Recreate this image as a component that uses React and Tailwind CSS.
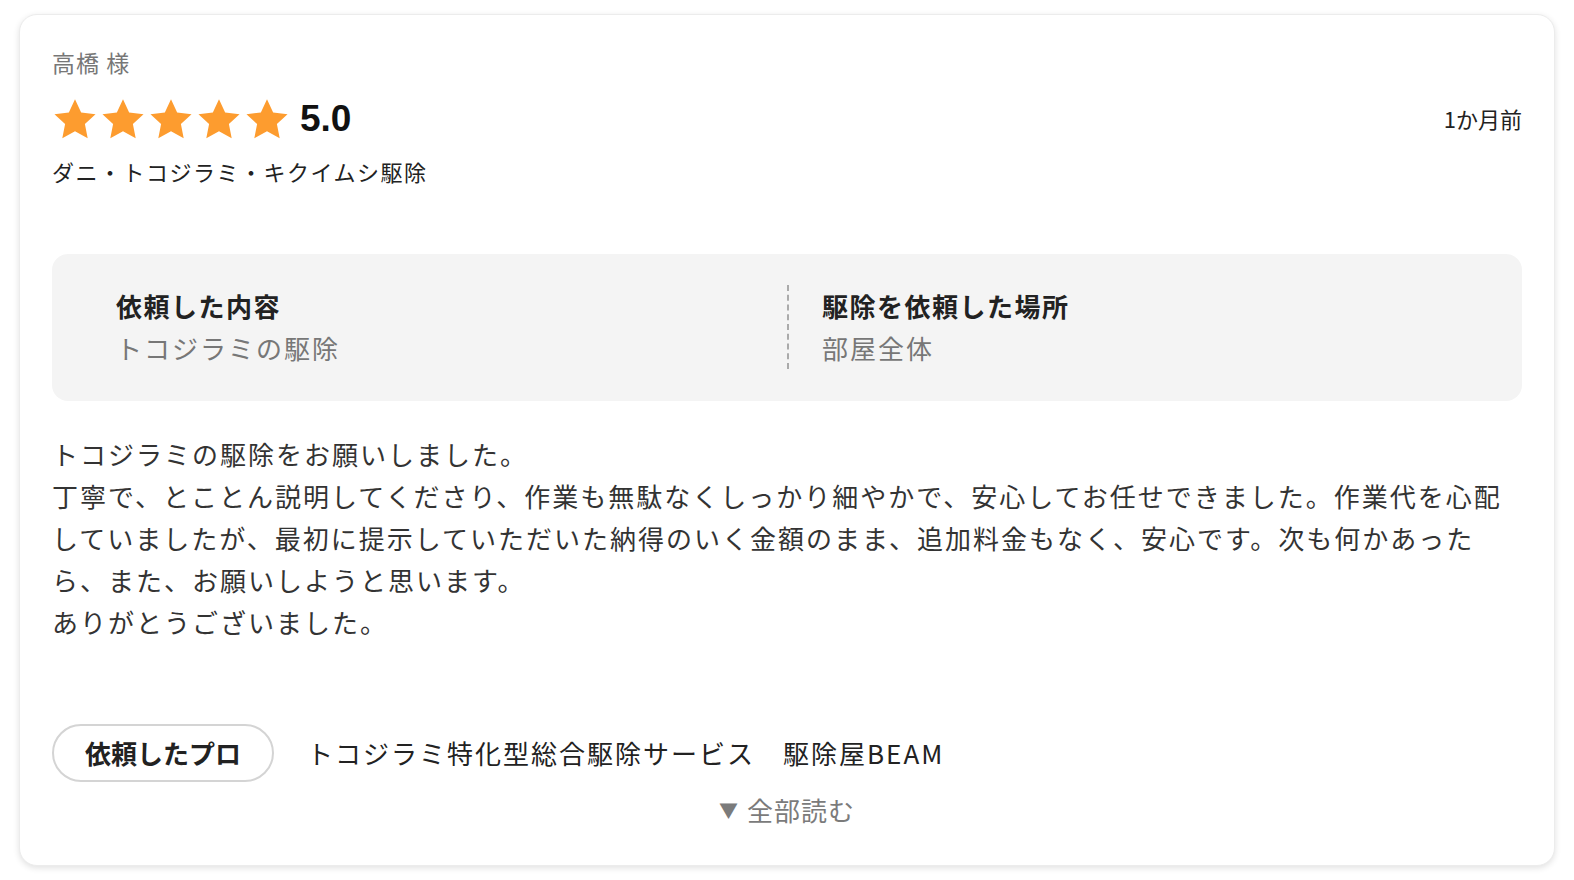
import React from 'react';

const Star = () => (
  <svg viewBox="0 0 24 24" className="w-[46px] h-[44px]" fill="#fd9c2f">
    <path d="M12 1.2l3.35 7.2 7.85.95-5.8 5.4 1.52 7.8L12 18.65 5.08 22.55l1.52-7.8-5.8-5.4 7.85-.95z" />
  </svg>
);

const App = () => {
  const font = { fontFamily: '"Noto Sans CJK JP", "Noto Sans", sans-serif' };

  return (
    <div className="min-h-screen bg-white pt-[14px] px-[19px] pb-[18px] w-[1574px]" style={font}>
      <div className="bg-white rounded-[18px] border border-[#ececec] shadow-[0_2px_6px_rgba(0,0,0,0.12)] px-[32px] pt-[33px] pb-[37px]">
        <div className="text-[23px] leading-[28px] tracking-[1px] text-[#777]">高橋 様</div>

        <div className="flex items-center justify-between mt-[15px]">
          <div className="flex items-center">
            <div className="flex gap-[2px]">
              {[0, 1, 2, 3, 4].map((i) => <Star key={i} />)}
            </div>
            <span className="ml-[10px] text-[37px] font-bold text-[#111]" style={{ fontFamily: '"Liberation Sans", Arial, sans-serif' }}>5.0</span>
          </div>
          <div className="text-[22px] text-[#222]">1か月前</div>
        </div>

        <div className="mt-[6px] text-[22px] leading-[36px] tracking-[1.5px] text-[#222]">ダニ・トコジラミ・キクイムシ駆除</div>

        <div className="mt-[65px] bg-[#f4f4f4] rounded-[16px] grid grid-cols-2 pt-[31px] pb-[32px]">
          <div className="pl-[64px]">
            <div className="text-[26px] leading-[42px] font-bold text-[#222] tracking-[1.5px]">依頼した内容</div>
            <div className="text-[26px] leading-[42px] text-[#777] tracking-[2px]">トコジラミの駆除</div>
          </div>
          <div className="border-l-2 border-dashed border-[#aaa] pl-[33px]">
            <div className="text-[26px] leading-[42px] font-bold text-[#222] tracking-[1.5px]">駆除を依頼した場所</div>
            <div className="text-[26px] leading-[42px] text-[#777] tracking-[2px]">部屋全体</div>
          </div>
        </div>

        <p className="mt-[32px] text-[26px] leading-[42px] tracking-[2px] text-[#333]">
          トコジラミの駆除をお願いしました。<br />
          丁寧で、とことん説明してくださり、作業も無駄なくしっかり細やかで、安心してお任せできました。作業代を心配していましたが、最初に提示していただいた納得のいく金額のまま、追加料金もなく、安心です。次も何かあったら、また、お願いしようと思います。<br />
          ありがとうございました。
        </p>

        <div className="mt-[81px] flex items-center">
          <div className="w-[222px] h-[58px] rounded-full border-2 border-[#d4d4d4] flex items-center justify-center text-[26px] font-bold text-[#222]">依頼したプロ</div>
          <div className="ml-[33px] text-[26px] tracking-[2px] text-[#222]">トコジラミ特化型総合駆除サービス　駆除屋BEAM</div>
        </div>

        <div className="mt-[10px] flex items-center justify-center text-[26px] leading-[36px] text-[#7b7b7b] tracking-[1px]">
          <span className="text-[19px] mr-[8px]">▼</span>
          <span>全部読む</span>
        </div>
      </div>
    </div>
  );
};

export default App;
